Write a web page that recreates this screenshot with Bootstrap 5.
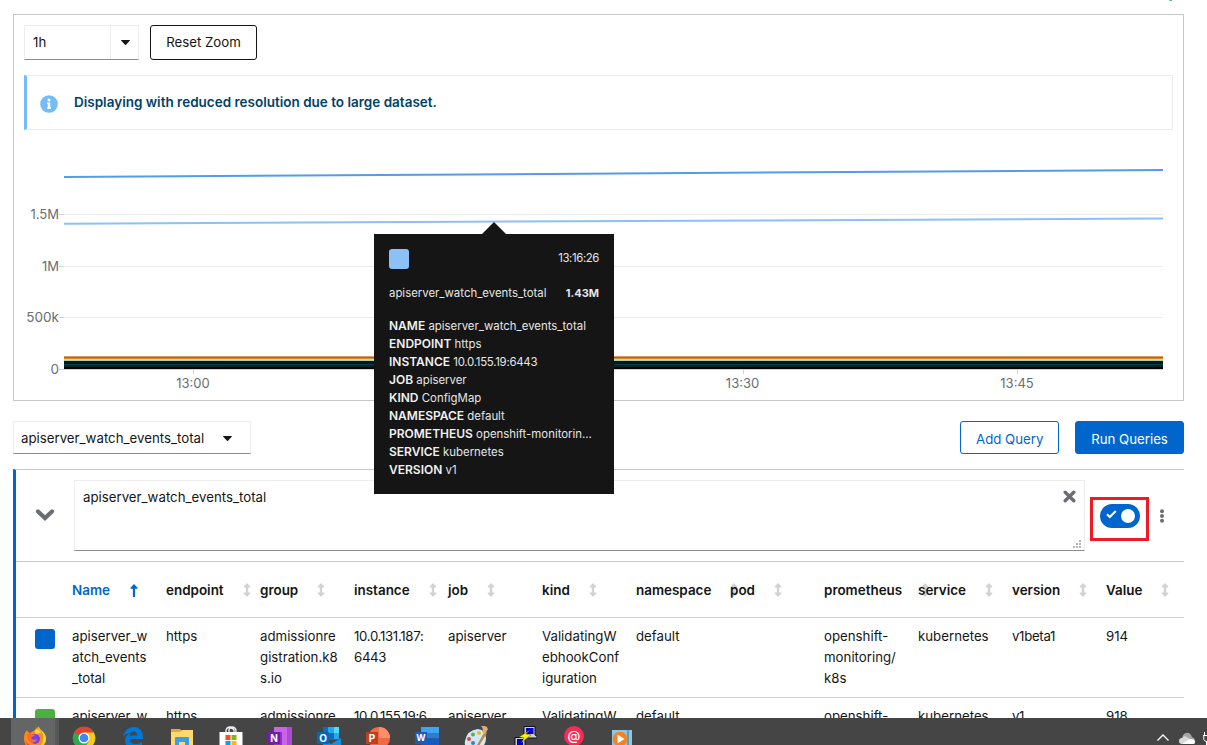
<!DOCTYPE html>
<html lang="en">
<head>
<meta charset="utf-8">
<title>Metrics</title>
<meta name="viewport" content="width=device-width, initial-scale=1">
<link rel="stylesheet" href="https://cdn.jsdelivr.net/npm/bootstrap@5.3.0/dist/css/bootstrap.min.css">
<style>
body{height:745px;overflow:hidden;background:#fff;color:#151515;font:13.25px/21px Inter,"Open Sans",sans-serif}
svg{display:block;flex:none}
.page-main{height:718px;padding:14px 23px 0 13px;overflow:hidden}
.graph-box{height:387px;border:1px solid #c7c7c7;padding:10px}
.ctl{border:1px solid #ededed;border-bottom-color:#8a8d90}
.span-select{width:115px;height:35px}
.span-select .arrow-cell{width:28px;padding-left:1px;border-left:1px solid #ededed}
.metric-select{width:238px;height:33px;padding:2px 0 0 7px}
.caret{width:9px;height:5px}
.btn{--bs-btn-font-size:13.25px;--bs-btn-line-height:21px;--bs-btn-padding-x:15px;--bs-btn-padding-y:5px;--bs-btn-border-radius:3px;white-space:nowrap}
.btn-reset{--bs-btn-color:#151515;--bs-btn-border-color:#151515;width:107px;height:35px;margin-left:11px}
.btn-add{--bs-btn-color:#06c;--bs-btn-border-color:#06c;width:99px;height:33px;padding-top:7px}
.btn-run{--bs-btn-color:#fff;--bs-btn-bg:#06c;--bs-btn-border-color:#06c;width:109px;height:33px;padding-top:7px}
.notice{height:55px;margin-top:15px;border:1px solid #ededed;border-left:3px solid #73bcf7;padding:0 0 0 13px;background:#fff}
.notice svg{margin-top:2px}
.notice strong{font-size:13.5px;font-weight:600;color:#004368;margin-left:16px}
.plot{margin:0 -10px}
.plot text{font-size:13px;fill:#6a6e73}
.plot .wide{font-size:13.5px}
.tip{position:absolute;left:374px;top:234px;width:240px;height:260px;background:#151515;color:#e6e6e6;font-size:11.4px;line-height:18px;padding:15px;z-index:5}
.tip .pointer{position:absolute;left:107px;top:-12px}
.tip b{font-size:12px;font-weight:600;color:#f0f0f0}
.tip .val{font-size:11px;font-weight:700}
.tip .tight{letter-spacing:-.4px}
.tip .addr{letter-spacing:-.25px}
.tip p{margin:0;white-space:nowrap}
.sw{width:20px;height:20px;border-radius:3px}
.query{border-top:1px solid #c7c7c7;border-left:3px solid #06c;margin-top:15px}
.query-head{height:91px;padding-top:10px}
.expr{width:1011px;height:71px;padding:6px 8px;position:relative}
.grip{position:absolute;right:3px;bottom:2px}
.mark-box{width:59px;height:44px;border:3px solid #ed1c24;margin:17px 0 0 5px;padding:4px 7px}
.switch-on{width:40px;height:24px;border-radius:12px;background:#06c;padding:0 5px 0 6px}
.switch-on svg{margin-bottom:3px}
.knob{width:14px;height:14px;border-radius:50%;background:#fff}
.series{table-layout:fixed;width:1168px;margin:0;border-collapse:separate;border-spacing:0}
.series th,.series td{border-bottom:1px solid #d2d2d2;padding:8px 0 8px 8px;white-space:nowrap;vertical-align:top;height:80px}
.series th{font-size:13.45px;font-weight:600;vertical-align:middle;padding-top:9px}
.series thead th{border-top:1px solid #c7c7c7;height:57px}
.series th.sorted{color:#06c}
.series .digits{letter-spacing:-.33px}
.series td .sw{margin:3px 0 0 11px}
.sort{gap:19px}
.sorted .sort{gap:20px}
.taskbar{height:27px;background:#454545;overflow:hidden;padding-left:10px}
.task{width:49px;padding-top:8px}
.task.active{background:linear-gradient(90deg,transparent 1px,#636566 1px 45px,#565858 45px)}
.corner{position:absolute;left:1168px;top:0}
</style>
</head>
<body>
<svg width="0" height="0" style="position:absolute"><defs>
<symbol id="ud" viewBox="0 0 8 14"><path d="M4 0l3.300 3.600v1H5.200v4.800h2.100v1L4 14 .7 10.400v-1h2.100V4.600H.7v-1z" fill="#d2d2d2"/></symbol>
<symbol id="car" viewBox="0 0 9 5"><path d="M.3 0h8.400q.3.4 0 .8L5 4.700q-.5.400-1 0L.3.8Q0 .4.300 0z" fill="#151515"/></symbol>
</defs></svg>
<svg class="corner" width="5" height="1"><path d="M1 0h3v1H2z" fill="#3cb79a"/></svg>
<main class="page-main">
  <section class="graph-box">
    <div class="d-flex">
      <div class="ctl span-select d-flex">
        <span class="flex-grow-1 ps-2 d-flex align-items-center">1h</span>
        <span class="arrow-cell d-flex align-items-center justify-content-center"><svg class="caret"><use href="#car"/></svg></span>
      </div>
      <button class="btn btn-reset">Reset Zoom</button>
    </div>
    <div class="notice d-flex align-items-center">
      <svg width="18" height="18" viewBox="0 0 18 18"><circle cx="9" cy="9" r="8.800" fill="#73bcf7"/><path d="M7 7.500h3.300v5H11v1.300H7v-1.300h.8V8.800H7z" fill="#fff"/><circle cx="9" cy="5.100" r="1.500" fill="#fff"/></svg>
      <strong>Displaying with reduced resolution due to large dataset.</strong>
    </div>
    <svg class="plot" width="1169" height="270" viewBox="14 130 1169 270">
      <path d="M59 214.500H1163M59 266.500H1163M59 317.500H1163" stroke="#ededed"/>
      <path d="M59 214.500h5M59 266.500h5M59 317.500h5M59 369.500H1163M193.500 369v5M468.500 369v5M743.500 369v5M1017.500 369v5" stroke="#d2d2d2"/>
      <path d="M64 177L1163 170" stroke="#519de9" stroke-width="2"/>
      <path d="M64 223.700L1163 218.500" stroke="#8bc1f7" stroke-width="2"/>
      <g shape-rendering="crispEdges">
        <path d="M64 356.500H1163" stroke="#dca06c"/><path d="M64 357.500H1163" stroke="#c15c00"/><path d="M64 358.500H1163" stroke="#e88a14"/><path d="M64 359.500H1163" stroke="#f6d173"/><path d="M64 360.500H1163" stroke="#a9cfb0"/>
        <path d="M64 362.500H1163" stroke="#001a1c" stroke-width="3"/><path d="M64 364.500H1163" stroke="#10393d"/><path d="M64 366H1163" stroke="#002532" stroke-width="2"/><path d="M64 368H1163" stroke="#000" stroke-width="2"/>
      </g>
      <g text-anchor="end"><text x="59" y="219">1.5M</text><text x="59" y="271">1M</text><text x="59" y="322" class="wide">500k</text><text x="59" y="374" class="wide">0</text></g>
      <g text-anchor="middle"><text x="193" y="388">13:00</text><text x="742.500" y="388">13:30</text><text x="1017" y="388">13:45</text></g>
    </svg>
  </section>

  <div class="d-flex align-items-start" style="margin-top:20px">
    <div class="ctl metric-select d-flex align-items-center"><span>apiserver_watch_events_total</span><svg class="caret" style="margin-left:19px"><use href="#car"/></svg></div>
    <button class="btn btn-add ms-auto me-3">Add Query</button>
    <button class="btn btn-run">Run Queries</button>
  </div>

  <section class="query">
    <div class="query-head d-flex">
      <svg width="58" height="71" viewBox="0 0 58 71"><path d="M22 31.500l7 6.500 7-6.500" fill="none" stroke="#6a6e73" stroke-width="4.300" stroke-linecap="round"/></svg>
      <div class="ctl expr d-flex justify-content-between align-items-start">
        <span>apiserver_watch_events_total</span>
        <svg width="13" height="13" viewBox="0 0 13 13" style="margin-top:3px"><path d="M2.200 2.200l8.600 8.600M10.800 2.200l-8.600 8.600" stroke="#6a6e73" stroke-width="3.400" stroke-linecap="round"/></svg>
        <svg class="grip" width="8" height="8" fill="#b5b5b5"><path d="M6 0h2v2h-2zM3 3h2v2h-2zM6 3h2v2h-2zM0 6h2v2h-2zM3 6h2v2h-2zM6 6h2v2h-2z"/></svg>
      </div>
      <div class="mark-box"><div class="switch-on d-flex align-items-center justify-content-between"><svg width="11" height="9" viewBox="0 0 11 9"><path d="M1 4.200l2.800 2.800L9.800 1" fill="none" stroke="#fff" stroke-width="2"/></svg><span class="knob"></span></div></div>
      <svg width="6" height="16" viewBox="0 0 6 16" fill="#6a6e73" style="margin:28px 0 0 10px"><circle cx="3" cy="3.200" r="2"/><circle cx="3" cy="8" r="2"/><circle cx="3" cy="12.800" r="2"/></svg>
    </div>
    <table class="series">
      <colgroup><col style="width:48px"><col span="11" style="width:94px"><col style="width:86px"></colgroup>
      <thead><tr>
        <th></th>
        <th class="sorted"><div class="sort d-flex align-items-center">Name<svg width="8" height="13" viewBox="0 0 8 13"><path d="M4 0l3.500 3.800v1H5.100V13H2.900V4.800H.5v-1z" fill="#06c"/></svg></div></th>
        <th><div class="sort d-flex align-items-center">endpoint<svg width="8" height="14"><use href="#ud"/></svg></div></th>
        <th><div class="sort d-flex align-items-center">group<svg width="8" height="14"><use href="#ud"/></svg></div></th>
        <th><div class="sort d-flex align-items-center">instance<svg width="8" height="14"><use href="#ud"/></svg></div></th>
        <th><div class="sort d-flex align-items-center">job<svg width="8" height="14"><use href="#ud"/></svg></div></th>
        <th><div class="sort d-flex align-items-center">kind<svg width="8" height="14"><use href="#ud"/></svg></div></th>
        <th><div class="sort d-flex align-items-center">namespace<svg width="8" height="14"><use href="#ud"/></svg></div></th>
        <th><div class="sort d-flex align-items-center">pod<svg width="8" height="14"><use href="#ud"/></svg></div></th>
        <th><div class="sort d-flex align-items-center">prometheus<svg width="8" height="14"><use href="#ud"/></svg></div></th>
        <th><div class="sort d-flex align-items-center">service<svg width="8" height="14"><use href="#ud"/></svg></div></th>
        <th><div class="sort d-flex align-items-center">version<svg width="8" height="14"><use href="#ud"/></svg></div></th>
        <th><div class="sort d-flex align-items-center">Value<svg width="8" height="14"><use href="#ud"/></svg></div></th>
      </tr></thead>
      <tbody>
        <tr><td><div class="sw" style="background:#06c"></div></td><td>apiserver_w<br>atch_events<br>_total</td><td>https</td><td>admissionre<br>gistration.k8<br>s.io</td><td class="digits">10.0.131.187:<br>6443</td><td>apiserver</td><td>ValidatingW<br>ebhookConf<br>iguration</td><td>default</td><td></td><td>openshift-<br>monitoring/<br>k8s</td><td>kubernetes</td><td class="digits">v1beta1</td><td>914</td></tr>
        <tr><td><div class="sw" style="background:#4cb140"></div></td><td>apiserver_w</td><td>https</td><td>admissionre</td><td class="digits">10.0.155.19:6</td><td>apiserver</td><td>ValidatingW</td><td>default</td><td></td><td>openshift-</td><td>kubernetes</td><td class="digits">v1</td><td>918</td></tr>
      </tbody>
    </table>
  </section>
</main>

<div class="tip">
  <svg class="pointer" width="26" height="13"><path d="M0 13L1 12L13 0L25 12L26 13z" fill="#151515"/></svg>
  <div class="d-flex justify-content-between"><span class="sw" style="background:#8bc1f7"></span><span class="tight">13:16:26</span></div>
  <div class="d-flex justify-content-between" style="margin:15px 0"><span>apiserver_watch_events_total</span><span class="val">1.43M</span></div>
  <p><b>NAME</b> apiserver_watch_events_total</p>
  <p><b>ENDPOINT</b> https</p>
  <p><b>INSTANCE</b> <span class="addr">10.0.155.19:6443</span></p>
  <p><b>JOB</b> apiserver</p>
  <p><b>KIND</b> ConfigMap</p>
  <p><b>NAMESPACE</b> default</p>
  <p><b>PROMETHEUS</b> openshift-monitorin...</p>
  <p><b>SERVICE</b> kubernetes</p>
  <p><b>VERSION</b> v1</p>
</div>

<footer class="taskbar d-flex">
  <!-- Firefox -->
  <div class="task active d-flex justify-content-center"><svg width="24" height="24" viewBox="0 0 24 24"><path d="M12 4q1-3 4-3 1 2 3 4 4 3 4 8a11 11 0 01-22 0Q1 7 4 4q0 2 3 3 2-1 5-3z" fill="#ff8a1c"/><path d="M15 0q0 3 3 5 3 3 2 8 0 5-4 8 7-2 7-8 0-5-4-8-3-2-4-5zM12 4q4-2 6 3l-6 1z" fill="#ffd83d"/><path d="M1 11q1 6 6 8 5 2 9 0-3 4-8 3-6-3-7-11z" fill="#ff3750"/><circle cx="12" cy="13" r="5" fill="#7542e5"/><path d="M4 8q5-2 8 2-3 0-4 2 2 3 6 1-2 5-7 3-3-3-3-8z" fill="#ff6a2a"/></svg></div>
  <!-- Chrome -->
  <div class="task d-flex justify-content-center"><svg width="24" height="24" viewBox="0 0 24 24"><circle cx="12" cy="12" r="11.300" fill="#2da94f"/><path d="M12 12L2.200 6.400A11.300 11.300 0 0121.800 6.400z" fill="#e34133"/><path d="M12 6.400h9.800A11.300 11.300 0 0112 23.300l5-8.500z" fill="#fdc715"/><circle cx="12" cy="12" r="5.500" fill="#fff"/><circle cx="12" cy="12" r="4.300" fill="#4285f4"/></svg></div>
  <!-- Edge -->
  <div class="task d-flex justify-content-center"><svg width="24" height="24" viewBox="0 0 24 24"><path d="M2 11Q4 1 13 1q9 0 9 12H8.500q.5 5 6.500 5 3 0 6-2v5q-3 2-7 2-10 0-10-9 0-4 5-7-5 .5-7 4zM8.700 9.500H16Q16 5.500 12.500 5.500 9 5.500 8.700 9.500z" fill="#0078d7"/></svg></div>
  <!-- File Explorer -->
  <div class="task d-flex justify-content-center"><svg width="24" height="24" viewBox="0 0 24 24"><path d="M1 3h9l2 2h10v16H1z" fill="#e8a92d"/><path d="M1 6h9l2-2h11v18H1z" fill="#ffd970"/><path d="M5 20v-8q0-1 1-1h12q1 0 1 1v8h-4v-4H9v4z" fill="#35a0e5"/></svg></div>
  <!-- Store -->
  <div class="task d-flex justify-content-center"><svg width="24" height="24" viewBox="0 0 24 24"><path d="M7 6V4q1-3 4-3h2q3 0 4 3v2M10 6V4q0-2 2-2t3 2v2" fill="none" stroke="#eee" stroke-width="1.300"/><path d="M.5 6h23v18H.5z" fill="#fff"/><path d="M6.500 9h5v5h-5z" fill="#f25022"/><path d="M12.500 9h5v5h-5z" fill="#7fba00"/><path d="M6.500 15h5v5h-5z" fill="#00a4ef"/><path d="M12.500 15h5v5h-5z" fill="#ffb900"/></svg></div>
  <!-- OneNote -->
  <div class="task d-flex justify-content-center"><svg width="24" height="24" viewBox="0 0 24 24"><path d="M6 1h18v22H6z" fill="#ca64ea"/><path d="M19 1h5v22h-5z" fill="#ae4bd5"/><path d="M6 6h8v14H6z" fill="#9332bf"/><path d="M0 6h12v12H0z" fill="#7719aa"/><text x="6" y="15.500" text-anchor="middle" font-size="10" font-weight="700" fill="#fff">N</text></svg></div>
  <!-- Outlook -->
  <div class="task d-flex justify-content-center"><svg width="24" height="24" viewBox="0 0 24 24"><path d="M6 1h16v13H6z" fill="#0f6cbd"/><path d="M11 1h6v6h-6zM17 7h5v6h-5z" fill="#28a8ea"/><path d="M17 1h5v6h-5z" fill="#50d9ff"/><path d="M6 13l8 5 10-6v12H6z" fill="#1490df"/><path d="M0 6h12v12H0z" fill="#0866b8"/><text x="6" y="15.500" text-anchor="middle" font-size="10" font-weight="700" fill="#fff">O</text></svg></div>
  <!-- PowerPoint -->
  <div class="task d-flex justify-content-center"><svg width="24" height="24" viewBox="0 0 24 24"><circle cx="13" cy="12" r="11" fill="#ed6c47"/><path d="M13 1a11 11 0 0111 11H13z" fill="#ff8f6b"/><path d="M0 6h12v12H0z" fill="#c43e1c"/><text x="6" y="15.500" text-anchor="middle" font-size="10" font-weight="700" fill="#fff">P</text></svg></div>
  <!-- Word -->
  <div class="task d-flex justify-content-center"><svg width="24" height="24" viewBox="0 0 24 24"><path d="M6 1h18v6H6z" fill="#41a5ee"/><path d="M6 7h18v5.500H6z" fill="#2b7cd3"/><path d="M6 12.500h18V24H6z" fill="#185abd"/><path d="M0 6h12v12H0z" fill="#1b5bbf"/><text x="6" y="15.300" text-anchor="middle" font-size="9" font-weight="700" fill="#fff">W</text></svg></div>
  <!-- Paint -->
  <div class="task d-flex justify-content-center"><svg width="24" height="24" viewBox="0 0 24 24"><path d="M1 15Q3 4 14 3q8 1 8 9 0 9-9 12H5q-5-3-4-9z" fill="#d3e8f4"/><circle cx="5" cy="13" r="2" fill="#e24a3b"/><circle cx="9" cy="8.500" r="2" fill="#5cb531"/><circle cx="15" cy="7" r="2" fill="#f2b32a"/><circle cx="9" cy="17" r="2" fill="#3180d8"/><path d="M21 5l-8 14-1 4 3-3 8-13z" fill="#b88a55"/><path d="M17 0q6-1 7 3l-3 5-3-2q2-3-1-6z" fill="#d8ae7c"/></svg></div>
  <!-- PuTTY -->
  <div class="task d-flex justify-content-center"><svg width="24" height="24" viewBox="0 0 24 24"><path d="M11 .5h11v8.500l2 1v2H14l-3-2z" fill="#ccc" stroke="#111"/><path d="M13 2h7.500v6H13z" fill="#00c"/><path d="M2 11.500h10v8l2 1v3H2z" fill="#ccc" stroke="#111"/><path d="M4 13h6v6H4z" fill="#00c"/><path d="M17 4L6 11l5 1-3 5 10-8-5-1z" fill="#ffef00" stroke="#333" stroke-width=".4"/></svg></div>
  <!-- Mail -->
  <div class="task d-flex justify-content-center"><svg width="24" height="24" viewBox="0 0 24 24"><circle cx="12" cy="10" r="10" fill="#f72c55"/><text x="12" y="14.300" text-anchor="middle" font-size="13" font-weight="500" fill="#fff">@</text></svg></div>
  <!-- Media player -->
  <div class="task d-flex justify-content-center"><svg width="24" height="24" viewBox="0 0 24 24"><path d="M1 4h20v20H1z" fill="#8fc6e2"/><path d="M16 4h2v20h-2z" fill="#5a9ec2"/><circle cx="9" cy="13" r="7.300" fill="#f5821f"/><path d="M6.500 8.500l7 4.500-7 4.500z" fill="#fff"/></svg></div>
  <!-- Tray -->
  <div class="ms-auto d-flex" style="padding-top:14px">
    <svg width="12" height="12" viewBox="0 0 12 12" style="margin:1px 10px 0 0"><path d="M.5 7.500L6 2l5.500 5.500" fill="none" stroke="#fff" stroke-width="1.300"/></svg>
    <svg width="16" height="13" viewBox="0 0 16 13"><path d="M3 8Q3 2 7 1q4-1 6 4 3 1 3 4H2z" fill="#a5a5a5"/><path d="M3 12Q0 12 0 9q0-3 3-3 2-3 5-1l3 2q4 0 5 3 0 2-2 2z" fill="#d8d8d8"/><path d="M3 12l8-5q5 0 5 3 0 2-2 2z" fill="#fff"/></svg>
    <svg width="4" height="13" viewBox="0 0 4 13" style="margin-left:8px"><path d="M1.500 0v3M0 3.500h4M.8 3.500v4q1 2 3 2M3.500 9v4" fill="none" stroke="#fff"/></svg>
  </div>
</footer>
<script src="https://cdn.jsdelivr.net/npm/bootstrap@5.3.0/dist/js/bootstrap.bundle.min.js"></script>
</body>
</html>
